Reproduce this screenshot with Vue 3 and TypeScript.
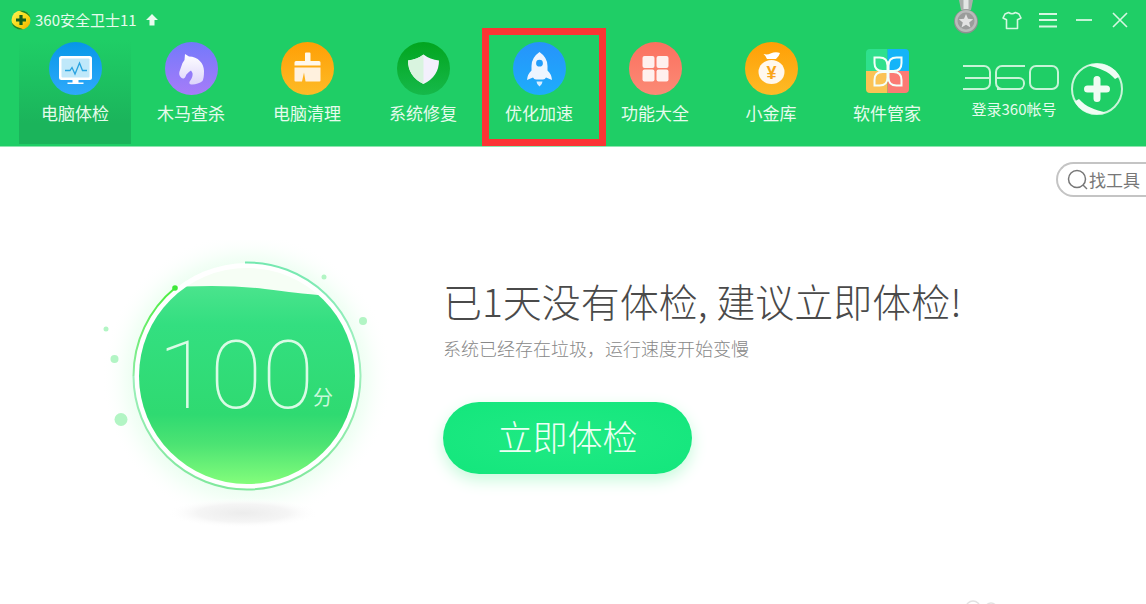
<script setup lang="ts">
import { ref } from 'vue'

interface NavItem {
  id: string
  label: string
  marked?: boolean
}

const items: NavItem[] = [
  { id: 'check', label: '电脑体检' },
  { id: 'trojan', label: '木马查杀' },
  { id: 'clean', label: '电脑清理' },
  { id: 'repair', label: '系统修复' },
  { id: 'speed', label: '优化加速', marked: true },
  { id: 'all', label: '功能大全' },
  { id: 'money', label: '小金库' },
  { id: 'soft', label: '软件管家' },
]

const active = ref('check')
const score = ref(100)
</script>

<template>
  <div class="app">
    <header class="header">
      <div class="titlebar">
        <svg class="app-logo" viewBox="0 0 20 20" aria-hidden="true">
          <defs>
            <linearGradient id="ball" x1="0" y1="0" x2="1" y2="1">
              <stop offset="0" stop-color="#fff35a" />
              <stop offset=".6" stop-color="#f7d512" />
              <stop offset="1" stop-color="#f3a800" />
            </linearGradient>
          </defs>
          <circle cx="10" cy="10" r="9.5" fill="url(#ball)" />
          <path d="M8 .8C13-.8 18.500 3 19.300 7.500 16 3 12 2.500 8 .8z" fill="#17862d" />
          <path d="M12 19.200C7 20.800 1.500 17 .7 12.500 4 17 8 17.500 12 19.200z" fill="#17862d" />
          <path d="M10 5v10M5 10h10" stroke="#14601d" stroke-width="3.200" />
        </svg>
        <span class="app-title">360安全卫士11</span>
        <svg class="up" viewBox="0 0 12 12" aria-hidden="true">
          <path d="M6 0l6 6H8.500v5.500h-5V6H0z" fill="#e9fbef" />
        </svg>
        <div class="window-tools">
          <button class="medal" type="button" aria-label="勋章">
            <svg viewBox="0 0 24 34" width="24" height="34">
              <path d="M5 0h14l-2 10H7z" fill="#a9aeab" />
              <path d="M9.500 0h5v9h-5z" fill="#e3e5e4" />
              <circle cx="12" cy="21.500" r="12" fill="#8e9190" />
              <circle cx="12" cy="21" r="11" fill="#b9bbba" />
              <circle cx="12" cy="21" r="8.500" fill="#9a9c9b" />
              <path d="M12 14l2 4.800 5.200.4-4 3.300 1.300 5-4.500-2.700-4.500 2.700 1.300-5-4-3.300 5.200-.4z" fill="#e2e2e2" />
            </svg>
          </button>
          <button class="tool" type="button" aria-label="皮肤">
            <svg viewBox="0 0 20 20" width="20" height="20" fill="none" stroke="#d5f7e1" stroke-width="1.600" stroke-linejoin="round">
              <path d="M6.500 2.500Q10 5 13.500 2.500L17 4l2 4-3.500 1.800V18.500h-11V9.800L1 8l2-4z" />
            </svg>
          </button>
          <button class="tool" type="button" aria-label="菜单">
            <svg viewBox="0 0 20 20" width="20" height="20" stroke="#d5f7e1" stroke-width="1.800">
              <path d="M1 4h18M1 10h18M1 16.500h18" />
            </svg>
          </button>
          <button class="tool" type="button" aria-label="最小化">
            <svg viewBox="0 0 20 20" width="20" height="20" stroke="#d5f7e1" stroke-width="1.800">
              <path d="M2 10h16" />
            </svg>
          </button>
          <button class="tool" type="button" aria-label="关闭">
            <svg viewBox="0 0 20 20" width="20" height="20" stroke="#d5f7e1" stroke-width="1.600">
              <path d="M3 3l14 14M17 3L3 17" />
            </svg>
          </button>
        </div>
      </div>

      <div class="bar">
        <nav class="nav">
          <button
            v-for="item in items"
            :key="item.id"
            type="button"
            class="nav-item"
            :class="{ active: active === item.id, marked: item.marked }"
            @click="active = item.id"
          >
            <svg class="nav-icon" viewBox="0 0 53 53" aria-hidden="true">
              <template v-if="item.id === 'check'">
                <defs>
                  <linearGradient id="g-check" x1="0" y1="0" x2="0" y2="1">
                    <stop offset="0" stop-color="#0797e8" />
                    <stop offset="1" stop-color="#2fa9fb" />
                  </linearGradient>
                </defs>
                <circle cx="26.5" cy="26.5" r="26.5" fill="url(#g-check)" />
                <rect x="10" y="14" width="33" height="24" rx="2.500" fill="#fff" />
                <rect x="12.500" y="16.500" width="28" height="19" rx="1" fill="#bfe8fa" />
                <path d="M23.500 38h6v2.500h5V42h-16v-1.500h5z" fill="#fff" />
                <path d="M16 28.500h5l2-3 3 6.500 4.500-11 3 7.500H38" fill="none" stroke="#2aa3e0" stroke-width="1.300" />
              </template>
              <template v-else-if="item.id === 'trojan'">
                <defs>
                  <linearGradient id="g-trojan" x1="0" y1="0" x2="0" y2="1">
                    <stop offset="0" stop-color="#7379fb" />
                    <stop offset="1" stop-color="#a77cf8" />
                  </linearGradient>
                  <linearGradient id="g-horse" x1="0" y1="0" x2="0" y2="1">
                    <stop offset="0" stop-color="#fff" />
                    <stop offset="1" stop-color="#ddd4fb" />
                  </linearGradient>
                </defs>
                <circle cx="26.5" cy="26.5" r="26.5" fill="url(#g-trojan)" />
                <path d="M20 12l4 2.500c9 0 15 7 15 14.500 0 5-.5 8-1.500 10-3 2.500-8 4-11.500 3.500-2-.5-2-2-1-3.500 2-3 3-5 2.500-8l-1.500-2.500c-2.500 2-4.500 3-5.500 6-1 2.500-3 2.500-4.500 1-2-2-2-4-1.500-6l3-8.500 2-3z" fill="url(#g-horse)" />
              </template>
              <template v-else-if="item.id === 'clean'">
                <defs>
                  <linearGradient id="g-clean" x1="0" y1="0" x2="0" y2="1">
                    <stop offset="0" stop-color="#ff9f05" />
                    <stop offset="1" stop-color="#fdbb27" />
                  </linearGradient>
                </defs>
                <circle cx="26.5" cy="26.5" r="26.5" fill="url(#g-clean)" />
                <path d="M24 11.500q0-1 1-1h3.500q1 0 1 1V19H38q1.500 0 1.500 1.500v3h-26v-3Q13.500 19 15 19h9z" fill="#fff8ec" />
                <path d="M13.500 25.500h26v13q0 1-1 1H24.500L23 30.500l-2 9h-6.500q-1 0-1-1z" fill="#fff1de" />
              </template>
              <template v-else-if="item.id === 'repair'">
                <defs>
                  <linearGradient id="g-repair" x1="0" y1="0" x2="0" y2="1">
                    <stop offset="0" stop-color="#02a51f" />
                    <stop offset="1" stop-color="#16b94a" />
                  </linearGradient>
                </defs>
                <circle cx="26.5" cy="26.5" r="26.5" fill="url(#g-repair)" />
                <path d="M42 18.500q0 16-15.500 23.500Q11 34.500 11 18.500q9-1 15.500-6 6.500 5 15.500 6z" fill="#f3f0fc" />
                <path d="M26.500 12.500Q20 17.500 11 18.500q0 16 15.500 23.500z" fill="#d9f4df" />
              </template>
              <template v-else-if="item.id === 'speed'">
                <defs>
                  <linearGradient id="g-speed" x1="0" y1="0" x2="0" y2="1">
                    <stop offset="0" stop-color="#2693fb" />
                    <stop offset="1" stop-color="#1eadfb" />
                  </linearGradient>
                </defs>
                <circle cx="26.5" cy="26.5" r="26.5" fill="url(#g-speed)" />
                <path fill-rule="evenodd" d="M26.500 10q8 5.500 8 14v4.500q4 3.500 4.500 9.500l-6-2.500q-1 2-3 2h-7q-2 0-3-2L14 38q.5-6 4.500-9.500V24q0-8.500 8-14zm0 7.800a3.400 3.400 0 1 0 0 6.800 3.400 3.400 0 1 0 0-6.800z" fill="#edf5ff" />
                <path d="M23.500 39.500h6q0 2.500-3 5-3-2.500-3-5z" fill="#d9eeff" />
              </template>
              <template v-else-if="item.id === 'all'">
                <defs>
                  <linearGradient id="g-all" x1="0" y1="0" x2="0" y2="1">
                    <stop offset="0" stop-color="#fb715f" />
                    <stop offset="1" stop-color="#fb8a76" />
                  </linearGradient>
                </defs>
                <circle cx="26.5" cy="26.5" r="26.5" fill="url(#g-all)" />
                <g fill="#fff0ee">
                  <rect x="13.500" y="14" width="12" height="12" rx="2" />
                  <rect x="27.500" y="14" width="12" height="12" rx="2" />
                  <rect x="13.500" y="27.500" width="12" height="12" rx="2" />
                  <rect x="27.500" y="27.500" width="12" height="12" rx="2" />
                </g>
              </template>
              <template v-else-if="item.id === 'money'">
                <defs>
                  <linearGradient id="g-money" x1="0" y1="0" x2="0" y2="1">
                    <stop offset="0" stop-color="#ff9f05" />
                    <stop offset="1" stop-color="#fdbb27" />
                  </linearGradient>
                </defs>
                <circle cx="26.5" cy="26.500" r="26.5" fill="url(#g-money)" />
                <path d="M18.500 12q4 1 7-.5 5-2 9.500-.5-1 3.500-4 6H22q-1-3-3.500-5z" fill="#fff" />
                <ellipse cx="26.500" cy="30" rx="13" ry="12" fill="#fff8ee" />
                <text x="26.500" y="36.500" text-anchor="middle" class="yen">¥</text>
              </template>
              <template v-else>
                <defs>
                  <clipPath id="tile"><rect x="5" y="7" width="43" height="44" rx="4" /></clipPath>
                </defs>
                <g clip-path="url(#tile)">
                  <path d="M5 7h21.500v22H5z" fill="#2fe08d" />
                  <path d="M26.500 7H48v22H26.500z" fill="#14b4f8" />
                  <path d="M5 29h21.500v22H5z" fill="#fbc355" />
                  <path d="M26.500 29H48v22H26.500z" fill="#fb7b74" />
                </g>
                <g fill="none" stroke="#f4fffa" stroke-width="2">
                  <path d="M13.500 15.500h5q8 0 8 8V29h-5q-8 0-8-8z" />
                  <path d="M40.500 15.500h-5q-8 0-8 8V29h5q8 0 8-8z" />
                  <path d="M13.500 43.500h5q8 0 8-8V30h-5q-8 0-8 8z" />
                  <path d="M40.500 43.500h-5q-8 0-8-8V30h5q8 0 8 8z" />
                </g>
              </template>
            </svg>
            <span class="nav-label">{{ item.label }}</span>
          </button>
        </nav>

        <div class="account">
          <div class="account-text">
            <div class="wordmark" role="img" aria-label="360">
              <span class="digit three"></span>
              <span class="digit six"></span>
              <span class="digit zero"></span>
            </div>
            <a class="login" href="#">登录360帐号</a>
          </div>
          <svg class="round-logo" viewBox="0 0 52 52" aria-hidden="true">
            <circle cx="26" cy="26" r="25" fill="none" stroke="#c9f5d9" stroke-width="2" />
            <path d="M17 2.500C30-2 43 3 48.500 13.500L44 16C37 8 28 5 17 2.500z" fill="#effcf3" />
            <path d="M35 49.500C22 54 9 49 3.500 38.500L8 36c7 8 16 11 27 13.500z" fill="#effcf3" />
            <path d="M26 16.500v19M16.500 26h19" stroke="#effcf3" stroke-width="7" stroke-linecap="round" />
          </svg>
        </div>
      </div>
    </header>

    <main class="main">
      <div class="search-row">
        <label class="search">
          <svg viewBox="0 0 22 22" width="22" height="22" fill="none" stroke="#777" stroke-width="1.500" aria-hidden="true">
            <circle cx="10" cy="10" r="8.500" />
            <path d="M16 16l4 4" />
          </svg>
          <input type="text" placeholder="找工具" aria-label="找工具" />
        </label>
      </div>

      <section class="hero">
        <svg class="gauge" viewBox="0 0 300 300" role="img" aria-label="100分">
          <defs>
            <radialGradient id="glow">
              <stop offset=".7" stop-color="#e6fdec" />
              <stop offset=".84" stop-color="#f4fff7" />
              <stop offset="1" stop-color="#fff" stop-opacity="0" />
            </radialGradient>
            <linearGradient id="water" x1="0" y1="45" x2="0" y2="244" gradientUnits="userSpaceOnUse">
              <stop offset="0" stop-color="#4be48d" />
              <stop offset=".2" stop-color="#33df80" />
              <stop offset=".65" stop-color="#2fda71" />
              <stop offset=".8" stop-color="#4ce373" />
              <stop offset="1" stop-color="#83fd7b" />
            </linearGradient>
            <linearGradient id="ring" x1="0" y1="0" x2="0" y2="1">
              <stop offset="0" stop-color="#74e8b0" />
              <stop offset=".4" stop-color="#a2f0c0" />
              <stop offset="1" stop-color="#80e89c" />
            </linearGradient>
            <linearGradient id="trail" x1="0" y1="1" x2="0" y2="0">
              <stop offset="0" stop-color="#8deca3" />
              <stop offset="1" stop-color="#4bee3f" />
            </linearGradient>
            <radialGradient id="ground">
              <stop offset="0" stop-color="#ececec" />
              <stop offset=".6" stop-color="#f5f5f5" />
              <stop offset="1" stop-color="#fff" stop-opacity="0" />
            </radialGradient>
            <clipPath id="disc"><circle cx="157" cy="136" r="108" /></clipPath>
          </defs>
          <circle cx="157" cy="138" r="145" fill="url(#glow)" />
          <ellipse cx="153" cy="273" rx="76" ry="15" fill="url(#ground)" />
          <circle cx="157" cy="136" r="113" fill="#fff" />
          <circle cx="157" cy="136" r="108" fill="#f6fef5" />
          <path d="M40 48L95 46.500Q140 44.500 175 49T228 55L275 58V250H40z" fill="url(#water)" clip-path="url(#disc)" />
          <path d="M155 22.500A113.500 113.500 0 1 1 43.500 136" fill="none" stroke="url(#ring)" stroke-width="2" />
          <path d="M43.500 136A113.500 113.500 0 0 1 85 48" fill="none" stroke="url(#trail)" stroke-width="2" />
          <circle cx="85" cy="48" r="2.800" fill="#3fe83a" />
          <g fill="#b2f5c4">
            <circle cx="234" cy="37" r="2.500" />
            <circle cx="273" cy="81" r="4" />
            <circle cx="16" cy="89" r="2.500" />
            <circle cx="24.500" cy="119" r="4" />
            <circle cx="31" cy="179.500" r="6.500" />
          </g>
          <text x="68" y="168" class="score">{{ score }}</text>
          <text x="223" y="165" class="unit">分</text>
        </svg>

        <div class="advice">
          <h1 class="headline">已1天没有体检, 建议立即体检!</h1>
          <p class="detail">系统已经存在垃圾，运行速度开始变慢</p>
          <button class="start" type="button">立即体检</button>
        </div>
      </section>

      <svg class="corner-mark" viewBox="0 0 36 4" aria-hidden="true">
        <g fill="none" stroke="#e2e2e2" stroke-width="1.500">
          <circle cx="9" cy="8" r="7" />
          <circle cx="27" cy="9" r="6" />
        </g>
      </svg>
    </main>
  </div>
</template>

<style>
body {
  margin: 0;
  background: #fff;
}
</style>

<style scoped>
.app {
  min-height: 100vh;
  display: flex;
  flex-direction: column;
  overflow: hidden;
  font-family: "Noto Sans CJK SC", "Noto Sans", sans-serif;
}
button {
  padding: 0;
  border: 0;
  background: none;
  font: inherit;
  color: inherit;
  cursor: pointer;
}
svg {
  display: block;
  flex: none;
}
.header {
  background: #1fce66;
  border-bottom: 1px solid #8ee6b0;
  color: #e6fbed;
}
.titlebar {
  height: 40px;
  display: flex;
  align-items: center;
  padding: 0 16px 0 11px;
}
.app-logo {
  width: 20px;
  height: 20px;
}
.app-title {
  margin: 0 9px 0 4px;
  font-size: 15px;
  line-height: 20px;
}
.up {
  width: 12px;
  height: 12px;
}
.window-tools {
  margin-left: auto;
  align-self: stretch;
  display: flex;
  align-items: center;
  gap: 16px;
}
.medal {
  align-self: flex-start;
  margin-right: 8px;
}
.bar {
  display: flex;
  justify-content: space-between;
  padding: 0 23px 2px 19px;
}
.nav {
  display: flex;
  gap: 4px;
}
.nav-item {
  position: relative;
  width: 112px;
  height: 104px;
  display: flex;
  flex-direction: column;
  align-items: center;
  padding-top: 2px;
}
.nav-item.active {
  background: linear-gradient(#1fce66, #1bb45b 80%);
}
.nav-item.marked::after {
  content: "";
  position: absolute;
  inset: -12px -11px -2px -1px;
  border: 7px solid #fb3434;
}
.nav-icon {
  width: 53px;
  height: 53px;
}
.nav-label {
  margin-top: 6px;
  font-size: 17px;
  line-height: 24px;
}
.yen {
  font: 700 18px "Liberation Sans", sans-serif;
  fill: #f9a51a;
}
.account {
  display: flex;
  align-items: flex-start;
  gap: 12px;
  padding-top: 23px;
}
.account-text {
  display: flex;
  flex-direction: column;
  align-items: center;
  padding-top: 2px;
}
.wordmark {
  display: flex;
  gap: 4px;
}
.digit {
  position: relative;
  box-sizing: border-box;
  width: 30px;
  height: 25px;
  border: 2px solid #c6f4d7;
  border-radius: 7px;
}
.three {
  width: 28px;
  border-left: 0;
  border-radius: 0 7px 7px 0;
}
.six {
  border-right: 0;
  border-radius: 7px 0 0 7px;
}
.three::after {
  content: "";
  position: absolute;
  left: 2px;
  right: 0;
  top: 10px;
  height: 2px;
  background: #c6f4d7;
}
.six {
  border-bottom-color: #c6f4d7;
  clip-path: inset(0 round 0 0 6px 0);
}
.six::after {
  content: "";
  position: absolute;
  box-sizing: border-box;
  left: 0;
  right: 0;
  top: 10px;
  bottom: -2px;
  border: 2px solid #c6f4d7;
  border-left: 0;
  border-radius: 0 6px 6px 0;
}
.login {
  margin: 9px 0 0 6px;
  font-size: 15px;
  line-height: 20px;
  color: #e6fbed;
  text-decoration: none;
}
.round-logo {
  width: 52px;
  height: 52px;
}
.main {
  position: relative;
  flex: 1;
  background: #fff;
}
.search-row {
  display: flex;
  justify-content: flex-end;
  padding-top: 15px;
}
.search {
  box-sizing: border-box;
  width: 90px;
  height: 35px;
  display: flex;
  align-items: center;
  padding-left: 9px;
  border: 2px solid #c4c4c4;
  border-right: 0;
  border-radius: 18px 0 0 18px;
}
.search input {
  flex: 1;
  min-width: 0;
  padding: 0;
  border: 0;
  outline: 0;
  background: none;
  font: 17px "Noto Sans CJK SC", sans-serif;
  color: #777;
}
.search input::placeholder {
  color: #777;
  opacity: 1;
}
.hero {
  display: flex;
  align-items: flex-start;
  gap: 53px;
  padding: 43px 24px 0 90px;
}
.gauge {
  width: 300px;
  height: 300px;
}
.score {
  font: 100 95px Roboto, Lato, sans-serif;
  fill: #d9fbe5;
}
.unit {
  font: 400 20px "Noto Sans CJK SC", sans-serif;
  fill: #c9f8da;
}
.advice {
  display: flex;
  flex-direction: column;
  align-items: flex-start;
  padding-top: 32px;
}
.headline {
  margin: 0;
  font-size: 39px;
  font-weight: 300;
  line-height: 56px;
  color: #4a4a4a;
  white-space: nowrap;
}
.detail {
  margin: 7px 0 0;
  font-size: 18px;
  font-weight: 300;
  line-height: 26px;
  color: #888;
}
.start {
  width: 249px;
  height: 72px;
  margin-top: 41px;
  padding-bottom: 5px;
  border-radius: 36px;
  background: radial-gradient(ellipse, #20ea84, #13e67c);
  box-shadow: 0 6px 16px #c6fadb;
  font-size: 35px;
  font-weight: 300;
  line-height: 52px;
  color: #edfff4;
}
.corner-mark {
  position: absolute;
  right: 146px;
  bottom: 0;
  width: 36px;
  height: 4px;
}
</style>
